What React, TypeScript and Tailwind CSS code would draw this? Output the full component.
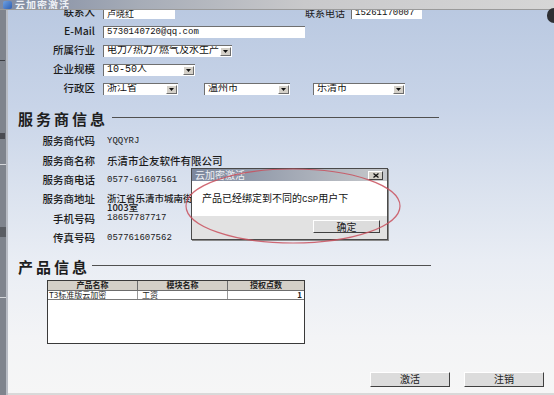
import React from "react";

const cjk = "font-['Noto_Sans_CJK_SC',sans-serif]";
const mono = "font-['Liberation_Mono','Noto_Sans_CJK_SC',monospace]";

function DropBtn() {
  return (
    <div className="w-[11px] h-[9px] mr-[1px] bg-[#d4d0c8] border border-t-white border-l-white border-b-[#6d6d6d] border-r-[#6d6d6d] flex items-center justify-center">
      <svg width="5" height="3" viewBox="0 0 5 3">
        <path d="M0 0h5L2.5 3z" fill="#111" />
      </svg>
    </div>
  );
}

function Input({ w, text, isMono }: { w: string; text: string; isMono?: boolean }) {
  return (
    <div
      className={`${w} h-[12px] bg-white border-t border-l border-t-[#6f6f6f] border-l-[#6f6f6f] flex items-center px-[3px] text-[9px] leading-none text-[#111] ${isMono ? mono : cjk}`}
    >
      {text}
    </div>
  );
}

function Select({ w, text }: { w: string; text: string }) {
  return (
    <div className={`${w} h-[12px] bg-white border-t border-l border-t-[#6f6f6f] border-l-[#6f6f6f] flex items-center justify-between pl-[3px] text-[10px] leading-none text-[#111] ${mono}`}>
      <span className="whitespace-nowrap overflow-hidden">{text}</span>
      <DropBtn />
    </div>
  );
}

function Label({ children }: { children: React.ReactNode }) {
  return <div className={`w-[87px] text-right text-[10.5px] leading-none font-medium text-[#1b1b1b] ${cjk}`}>{children}</div>;
}

function SectionTitle({ title, lineW }: { title: string; lineW: string }) {
  return (
    <div className="h-[20px] flex items-center pl-[10px]">
      <span className={`text-[15px] leading-none font-bold tracking-[3px] text-[#1e1e1e] ${cjk}`}>{title}</span>
      <div className={`${lineW} h-px bg-[#505050] -mt-[2px]`} />
    </div>
  );
}

function InfoRow({ label, value, isMono }: { label: string; value: string; isMono?: boolean }) {
  return (
    <div className="h-[19.3px] flex items-center">
      <Label>{label}</Label>
      <span className={`ml-[12px] leading-none text-[#1b1b1b] ${isMono ? `text-[9px] ${mono}` : `text-[10.5px] font-medium ${cjk}`}`}>{value}</span>
    </div>
  );
}

function ClassicButton({ w, h, children }: { w: string; h: string; children: React.ReactNode }) {
  return (
    <div className={`${w} ${h} bg-[#dcdcdc] border border-t-white border-l-white border-b-[#404040] border-r-[#404040] flex items-center justify-center text-[10px] leading-none text-[#222] ${cjk}`}>
      {children}
    </div>
  );
}

export default function App() {
  return (
    <div className="w-[554px] h-[395px] relative overflow-hidden bg-white flex flex-col">
      {/* title bar */}
      <div className="h-[10px] shrink-0 flex items-center overflow-hidden bg-[linear-gradient(90deg,#7f8aa1_0%,#a6acb7_25%,#c9c9cb_55%,#d6d6d6_100%)] border-b border-b-[#9a9a9a]">
        <div className="w-[9px] h-[8px] ml-[3px] rounded-[2px] bg-[linear-gradient(135deg,#6fa0e0,#2c5fb5)]" />
        <span className={`ml-[3px] text-[10px] leading-none font-bold text-[#eef1f6] tracking-[1px] ${cjk}`}>云加密激活</span>
      </div>

      <div className="flex-1 flex min-h-0">
        {/* left strip of window behind */}
        <div className="w-[8px] shrink-0 bg-[#7f848d] border-r-2 border-r-[#b8bcc4] flex flex-col">
          <div className="mt-[50px] w-[5px] h-px bg-[#3b3d42]" />
          <div className="mt-[72px] w-[5px] h-[6px] bg-[#4a4c52]" />
          <div className="mt-[25px] w-[6px] h-px bg-[#d5d7db]" />
          <div className="mt-[62px] w-[6px] h-[10px] bg-[#5a5d63]" />
          <div className="mt-[60px] w-[6px] h-px bg-[#d5d7db]" />
        </div>

        {/* main panel */}
        <div className="flex-1 min-w-0 overflow-hidden flex flex-col bg-[linear-gradient(180deg,#bac9e1_0%,#c8d4e8_25%,#d9e1ee_45%,#e9edf4_65%,#f3f4f6_85%,#f6f6f6_100%)]">
          <div className="h-[19px] -mt-[7px] flex items-center">
            <Label>联系人</Label>
            <div className="ml-[8px]">
              <Input w="w-[72px]" text="卢晓红" />
            </div>
            <div className={`ml-[130px] text-[10px] leading-none text-[#1b1b1b] ${cjk}`}>联系电话</div>
            <div className="ml-[6px]">
              <Input w="w-[71px]" text="15261170007" isMono />
            </div>
          </div>
          <div className="h-[19px] flex items-center">
            <Label>E-Mail</Label>
            <div className="ml-[8px]">
              <Input w="w-[202px]" text="5730140720@qq.com" isMono />
            </div>
          </div>
          <div className="h-[19px] flex items-center">
            <Label>所属行业</Label>
            <div className="ml-[8px]">
              <Select w="w-[129px]" text="电力/热力/燃气及水生产" />
            </div>
          </div>
          <div className="h-[19px] flex items-center">
            <Label>企业规模</Label>
            <div className="ml-[8px]">
              <Select w="w-[92px]" text="10-50人" />
            </div>
          </div>
          <div className="h-[19px] flex items-center">
            <Label>行政区</Label>
            <div className="ml-[8px] flex items-center">
              <Select w="w-[75px]" text="浙江省" />
              <div className="ml-[26px]">
                <Select w="w-[86px]" text="温州市" />
              </div>
              <div className="ml-[23px]">
                <Select w="w-[92px]" text="乐清市" />
              </div>
            </div>
          </div>

          <div className="mt-[10px]">
            <SectionTitle title="服务商信息" lineW="w-[327px] ml-[4px]" />
          </div>

          <div className="mt-[4px] flex flex-col">
            <InfoRow label="服务商代码" value="YQQYRJ" isMono />
            <InfoRow label="服务商名称" value="乐清市企友软件有限公司" />
            <InfoRow label="服务商电话" value="0577-61607561" isMono />
            <div className="h-[19.3px] flex items-start">
              <div className="h-[19px] flex items-center">
                <Label>服务商地址</Label>
              </div>
              <div className={`ml-[12px] pt-[4px] text-[9.5px] leading-[9.5px] font-medium text-[#1b1b1b] whitespace-nowrap ${cjk}`}>
                浙江省乐清市城南街道清远路
                <br />
                1003室
              </div>
            </div>
            <InfoRow label="手机号码" value="18657787717" isMono />
            <InfoRow label="传真号码" value="057761607562" isMono />
          </div>

          <div className="mt-[9px]">
            <SectionTitle title="产品信息" lineW="w-[339px] ml-[2px]" />
          </div>

          {/* product table */}
          <div className="mt-[3px] ml-[39px] w-[258px] h-[64px] bg-white border border-[#3a3a3a] flex flex-col">
            <div className={`h-[10px] flex bg-[#d4d0c8] text-[8px] leading-none font-bold text-[#222] ${cjk}`}>
              <div className="w-[90px] flex items-center justify-center border-r border-r-[#6d6d6d] border-b border-b-[#6d6d6d]">产品名称</div>
              <div className="w-[90px] flex items-center justify-center border-r border-r-[#6d6d6d] border-b border-b-[#6d6d6d]">模块名称</div>
              <div className="flex-1 flex items-center justify-center border-b border-b-[#6d6d6d]">授权点数</div>
            </div>
            <div className={`h-[9px] flex text-[8px] leading-none text-[#222] border-b border-b-[#7a7a7a] ${cjk}`}>
              <div className="w-[90px] flex items-center pl-[1px] border-r border-r-[#9a9a9a] whitespace-nowrap overflow-hidden">T3标准版云加密</div>
              <div className="w-[90px] flex items-center pl-[4px] border-r border-r-[#9a9a9a]">工资</div>
              <div className="flex-1 flex items-center justify-end pr-[2px] font-bold">1</div>
            </div>
          </div>

          <div className="mt-[28px] flex justify-end gap-[14px] pr-[10px]">
            <ClassicButton w="w-[80px]" h="h-[15px]">激活</ClassicButton>
            <ClassicButton w="w-[80px]" h="h-[15px]">注销</ClassicButton>
          </div>

          <div className="mt-auto h-[2px] bg-[#d9d9d9]" />
        </div>
      </div>

      {/* corner of something behind, top right */}
      <div className="absolute left-[547px] top-[8px] w-[14px] h-[15px] rounded-full bg-[#2e2f33]" />

      {/* message dialog */}
      <div className="absolute left-[191px] top-[168px] w-[197px] h-[72px] flex flex-col border border-[#4a4a4a] shadow-[1px_1px_0_#8a8a8a]">
        <div className="h-[12px] shrink-0 flex items-center justify-between bg-[linear-gradient(90deg,#7c879d_0%,#9ea5b2_45%,#c7c9cc_100%)]">
          <span className={`ml-[3px] text-[10px] leading-none text-[#eef0f4] ${cjk}`}>云加密激活</span>
          <div className="mr-[4px] w-[15px] h-[9px] bg-[#d4d0c8] border border-t-white border-l-white border-b-[#404040] border-r-[#404040] flex items-center justify-center">
            <svg width="6" height="5" viewBox="0 0 6 5">
              <path d="M0.5 0.5L5.5 4.5M5.5 0.5L0.5 4.5" stroke="#111" strokeWidth="1.3" />
            </svg>
          </div>
        </div>
        <div className="h-[35px] shrink-0 bg-white flex items-center pl-[10px]">
          <span className={`text-[10px] leading-none text-[#111] ${cjk}`}>产品已经绑定到不同的<span className={`text-[9px] ${mono}`}>CSP</span>用户下</span>
        </div>
        <div className="flex-1 bg-[#e2e2e2] flex justify-end items-start pt-[4px] pr-[7px]">
          <ClassicButton w="w-[67px]" h="h-[13px]">确定</ClassicButton>
        </div>
      </div>

      {/* red hand-drawn ellipse */}
      <svg className="absolute left-0 top-0 pointer-events-none" width="554" height="395" viewBox="0 0 554 395">
        <ellipse cx="293" cy="206" rx="107" ry="37" fill="none" stroke="#c9505d" strokeWidth="1.2" opacity="0.85" />
      </svg>
    </div>
  );
}
